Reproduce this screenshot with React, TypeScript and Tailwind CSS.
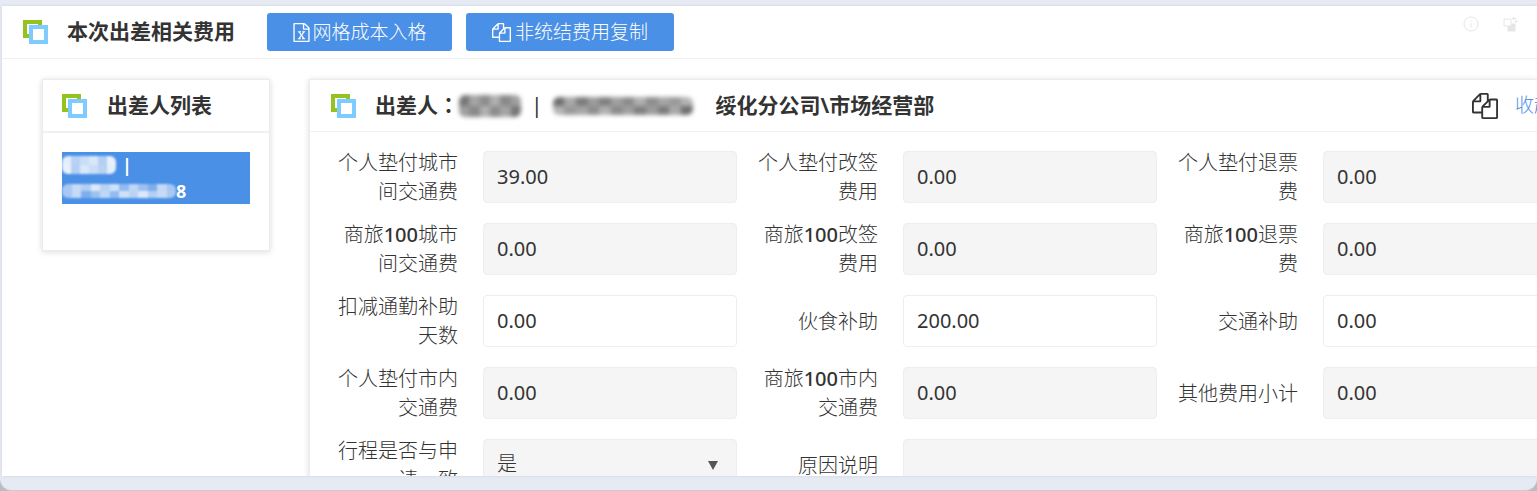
import React from "react";
import clsx from "clsx";

interface IconProps {
  className?: string;
}

const SquaresLogo: React.FC<IconProps> = ({ className }) => (
  <svg viewBox="0 0 25 24" className={clsx("h-6 w-[25px] shrink-0", className)} aria-hidden="true">
    <rect x="2" y="2" width="15" height="14" fill="none" stroke="#93c31f" strokeWidth="4" />
    <rect x="8" y="7" width="15" height="15" fill="#ffffff" stroke="#7ecbff" strokeWidth="4" />
  </svg>
);

const CopyIcon: React.FC<IconProps> = ({ className }) => (
  <svg viewBox="0 0 1792 1792" className={className} fill="currentColor" aria-hidden="true">
    <path d="M1696 384q40 0 68 28t28 68v1216q0 40-28 68t-68 28h-960q-40 0-68-28t-28-68v-288h-544q-40 0-68-28t-28-68v-672q0-40 20-88t48-76l408-408q28-28 76-48t88-20h416q40 0 68 28t28 68v328q68-40 128-40h416zm-544 213l-299 299h299v-299zm-640-384l-299 299h299v-299zm196 647l316-316v-416h-384v416q0 40-28 68t-68 28h-416v640h512v-256q0-40 20-88t48-76zm956 804v-1152h-384v416q0 40-28 68t-68 28h-416v640h896z" />
  </svg>
);

const ExcelIcon: React.FC<IconProps> = ({ className }) => (
  <svg viewBox="0 0 1792 1792" className={className} fill="currentColor" aria-hidden="true">
    <path d="M1596 380q28 28 48 76t20 88v1152q0 40-28 68t-68 28h-1344q-40 0-68-28t-28-68v-1600q0-40 28-68t68-28h896q40 0 88 20t76 48zm-444-244v376h376q-10-29-22-41l-313-313q-12-12-41-22zm384 1528v-1024h-416q-40 0-68-28t-28-68v-416h-768v1536h1280zm-979-234v106h281v-106h-75l103-161q5-7 10-16.5t7.5-13.5 3.5-4h2q1 4 5 10 2 4 4.5 7.5t6 8 6.5 8.5l107 161h-76v106h291v-106h-68l-192-273 195-282h67v-107h-279v107h74l-103 159q-4 7-10 16.5t-9 13.5l-2 3h-2q-1-4-5-10-6-11-17-23l-106-159h76v-107h-290v107h68l189 272-194 283h-68z" />
  </svg>
);

// Mosaic that stands in for personal data, two rows of blocks
const Redacted: React.FC<{ shades: string[]; className?: string }> = ({ shades, className }) => (
  <span
    aria-hidden="true"
    className={clsx("inline-flex shrink-0 flex-col overflow-hidden rounded-md", className)}
  >
    <span className="flex flex-1">
      {shades.map((shade, i) => (
        <span key={i} className={clsx("flex-1", shade)} />
      ))}
    </span>
    <span className="flex flex-1 flex-row-reverse">
      {shades.map((shade, i) => (
        <span key={i} className={clsx("flex-1", shade)} />
      ))}
    </span>
  </span>
);

const DARK_NAME = ["bg-[#777777]", "bg-[#a5a5a5]", "bg-[#8d8d8d]", "bg-[#b0b0b0]", "bg-[#8a8a8a]", "bg-[#a0a0a0]"];
const DARK_ID = [
  "bg-[#707070]", "bg-[#a8a8a8]", "bg-[#7c7c7c]", "bg-[#9c9c9c]", "bg-[#808080]", "bg-[#a0a0a0]",
  "bg-[#8c8c8c]", "bg-[#b0b0b0]", "bg-[#8e8e8e]", "bg-[#a6a6a6]", "bg-[#9a9a9a]", "bg-[#b4b4b4]",
];
const LIGHT_NAME = ["bg-[#e4edfa]", "bg-[#b8d2f4]", "bg-[#c9ddf7]", "bg-[#d9e7fa]", "bg-[#b4cff3]", "bg-[#e8f0fb]"];
const LIGHT_ID = [
  "bg-[#a9c9f2]", "bg-[#c6dbf7]", "bg-[#b3cff4]", "bg-[#dce8fa]", "bg-[#b9d3f5]", "bg-[#cfe1f8]",
  "bg-[#92bbef]", "bg-[#bfd7f6]", "bg-[#9cc1f0]", "bg-[#7dadec]", "bg-[#c4daf6]", "bg-[#a5c7f2]",
];

interface Field {
  id: string;
  label: React.ReactNode;
  value: string;
  editable?: boolean;
}

const hundred = <span className="font-medium">100</span>;

const fields: Field[] = [
  { id: "city-transport", label: "个人垫付城市间交通费", value: "39.00" },
  { id: "change-fee", label: "个人垫付改签费用", value: "0.00" },
  { id: "refund-fee", label: "个人垫付退票费", value: "0.00" },
  { id: "sl-city-transport", label: <>商旅{hundred}城市间交通费</>, value: "0.00" },
  { id: "sl-change-fee", label: <>商旅{hundred}改签费用</>, value: "0.00" },
  { id: "sl-refund-fee", label: <>商旅{hundred}退票费</>, value: "0.00" },
  { id: "commute-days", label: "扣减通勤补助天数", value: "0.00", editable: true },
  { id: "meal", label: "伙食补助", value: "200.00", editable: true },
  { id: "transport", label: "交通补助", value: "0.00", editable: true },
  { id: "local-transport", label: "个人垫付市内交通费", value: "0.00" },
  { id: "sl-local-transport", label: <>商旅{hundred}市内交通费</>, value: "0.00" },
  { id: "other-total", label: "其他费用小计", value: "0.00" },
];

const controlClass = "h-[52px] rounded-sm border border-[#eeeeee] px-[13px] pb-0.5 text-xl text-[#333333] outline-none";

const FieldLabel: React.FC<{ htmlFor: string; children: React.ReactNode }> = ({ htmlFor, children }) => (
  <label htmlFor={htmlFor} className="w-[120px] shrink-0 text-right text-xl/[29px] font-light">
    {children}
  </label>
);

export default function App() {
  return (
    <div className="h-screen overflow-hidden bg-[#b9bcc2] font-['Noto_Sans','Noto_Sans_CJK_SC',sans-serif] text-[#333333]">
      <div className="flex h-full flex-col rounded-b-xl border-b border-[#c9ccd2] bg-[#e6eaf3] pt-1.5 pb-3.5 pl-0.5">
        <main className="flex min-h-0 flex-1 flex-col overflow-hidden bg-white shadow-[0_0_3px_#cfd4de]">
          <header className="flex h-[53px] shrink-0 items-center border-b border-[#f0f0f0] pl-[21px]">
            <SquaresLogo />
            <h1 className="ml-[19px] text-[21px] font-bold whitespace-nowrap">本次出差相关费用</h1>
            <button className="ml-8 flex h-[38px] w-[185px] shrink-0 items-center justify-center gap-px rounded-[3px] bg-[#4a90e6] text-[19px] font-light text-white">
              <ExcelIcon className="h-[19px] w-[19px]" />
              网格成本入格
            </button>
            <button className="ml-3.5 flex h-[38px] w-[208px] shrink-0 items-center justify-center gap-1 rounded-[3px] bg-[#4a90e6] text-[19px] font-light text-white">
              <CopyIcon className="h-[19px] w-[19px]" />
              非统结费用复制
            </button>
            <div className="mr-[18px] mb-4 ml-auto flex items-center gap-6 text-[#e6e6e6]">
              <button aria-label="说明">
                <svg viewBox="0 0 16 16" className="h-4 w-4" fill="none" stroke="currentColor">
                  <circle cx="8" cy="8" r="7" />
                  <path d="M8 4.5v1.2M8 7v4.5" />
                </svg>
              </button>
              <button aria-label="切换">
                <svg viewBox="0 0 16 16" className="h-4 w-4" fill="none" stroke="currentColor">
                  <path d="M5 8h7v7H5z" fill="currentColor" />
                  <path d="M1 3h7v7H1z" fill="#ffffff" />
                  <path d="M9.5 2.5h3.5v4M11 1 9.5 2.5 11 4M11.5 5 13 6.5 14.5 5" />
                </svg>
              </button>
            </div>
          </header>

          <div className="flex items-start pt-5 pl-10">
            <aside className="h-[172px] w-[228px] shrink-0 border border-[#eaecef] bg-white shadow-[0_1px_6px_rgba(0,0,0,0.15)]">
              <div className="flex h-[53px] items-center border-b-2 border-[#f0f0f0] pl-[19px]">
                <SquaresLogo />
                <h2 className="ml-5 text-[21px] font-bold">出差人列表</h2>
              </div>
              <ul className="px-[19px] pt-[19px]">
                <li>
                  <a href="#traveler" className="block bg-[#4a90e6] text-lg/[26px] font-bold text-white">
                    <span className="flex items-center gap-1.5">
                      <Redacted shades={LIGHT_NAME} className="h-[18px] w-[54px] blur-[1px]" />|
                    </span>
                    <span className="flex items-center">
                      <Redacted shades={LIGHT_ID} className="h-3.5 w-[114px] blur-[1px]" />8
                    </span>
                  </a>
                </li>
              </ul>
            </aside>

            <section className="ml-[39px] min-w-0 flex-1 border-t border-l border-[#eaecef] bg-white shadow-[0_1px_6px_rgba(0,0,0,0.15)]">
              <div className="flex h-[52px] items-center border-b border-[#f0f0f0] pl-[21px]">
                <SquaresLogo />
                <h2 className="ml-[19px] flex items-center text-[21px] font-bold whitespace-nowrap">
                  <span className="font-['Noto_Sans','Noto_Sans_CJK_SC',sans-serif]">
                    出差人<span className="font-['Noto_Sans_CJK_TC',sans-serif]" lang="zh-TW">：</span>
                  </span>
                  <Redacted shades={DARK_NAME} className="h-[22px] w-[62px] blur-[2px]" />
                  <span className="mx-2.5 font-normal">|</span>
                  <Redacted shades={DARK_ID} className="mr-[23px] h-[18px] w-[140px] blur-[2px]" />
                  绥化分公司\市场经营部
                </h2>
                <div className="ml-auto flex w-[65px] shrink-0 items-center gap-[17px] overflow-hidden">
                  <button aria-label="复制" className="shrink-0">
                    <CopyIcon className="h-[26px] w-[26px]" />
                  </button>
                  <a href="#collapse" className="shrink-0 text-[19px] font-light text-[#4a90e6]">
                    收起
                  </a>
                </div>
              </div>

              <form className="grid grid-cols-[repeat(3,399px)] gap-x-[21px] gap-y-5 pt-[19px] pl-7">
                {fields.map((field) => (
                  <div key={field.id} className="flex h-[52px] items-center gap-[25px]">
                    <FieldLabel htmlFor={field.id}>{field.label}</FieldLabel>
                    <input
                      id={field.id}
                      defaultValue={field.value}
                      readOnly={!field.editable}
                      className={clsx(controlClass, "w-[254px]", field.editable ? "bg-white" : "bg-[#f5f5f5]")}
                    />
                  </div>
                ))}
                <div className="flex h-[52px] items-center gap-[25px]">
                  <FieldLabel htmlFor="consistent">行程是否与申请一致</FieldLabel>
                  <div className="relative">
                    <select
                      id="consistent"
                      defaultValue="是"
                      className={clsx(controlClass, "w-[254px] appearance-none bg-[#f5f5f5] font-light")}
                    >
                      <option>是</option>
                      <option>否</option>
                    </select>
                    <svg viewBox="0 0 10 9" className="pointer-events-none absolute top-[22px] right-[19px] h-[9px] w-2.5 fill-[#555555]">
                      <path d="M0 0h10L5 9z" />
                    </svg>
                  </div>
                </div>
                <div className="col-span-2 flex h-[52px] items-center gap-[25px]">
                  <FieldLabel htmlFor="reason">原因说明</FieldLabel>
                  <input id="reason" readOnly className={clsx(controlClass, "min-w-0 flex-1 bg-[#f5f5f5]")} />
                </div>
              </form>
            </section>
          </div>
        </main>
      </div>
    </div>
  );
}
